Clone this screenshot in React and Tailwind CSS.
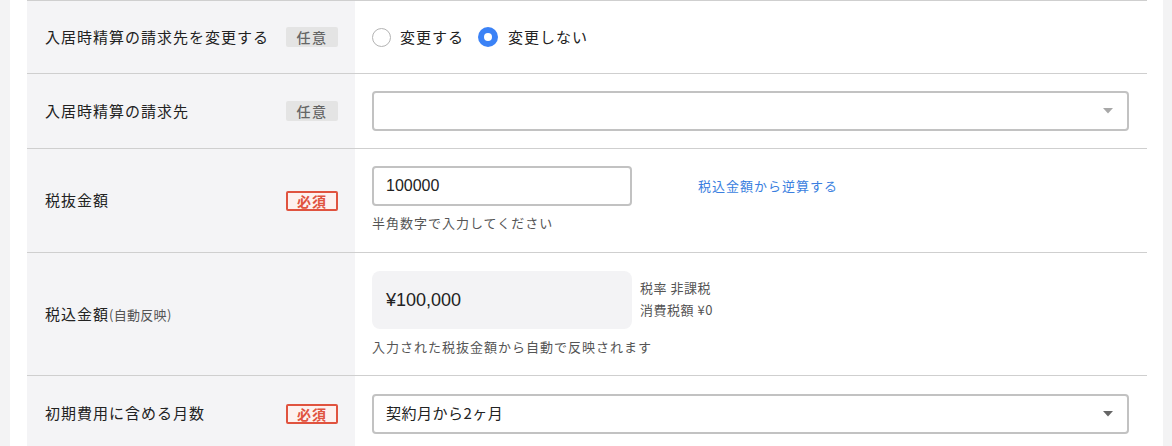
import React from "react";

const font = { fontFamily: '"Noto Sans CJK JP", "Liberation Sans", sans-serif' };

function Badge({ required }) {
  if (required) {
    return (
      <span className="flex h-[20px] w-[52px] items-center justify-center rounded-[2px] border-2 border-[#e0533f] bg-[#fdf1ef] text-[14px] font-bold leading-none tracking-[1px] text-[#e0533f]">
        必須
      </span>
    );
  }
  return (
    <span className="flex h-[20px] w-[52px] items-center justify-center rounded-[2px] bg-[#e4e4e4] text-[14px] font-medium leading-none tracking-[1.5px] text-[#666]">
      任意
    </span>
  );
}

function Row({ label, badge, children, height }) {
  return (
    <div className="flex border-b border-[#cfcfcf]" style={{ minHeight: height }}>
      <div className="flex w-[328px] shrink-0 items-center justify-between bg-[#f4f4f6] pl-[18px] pr-[17px]">
        <div className="text-[15px] tracking-[1px] text-[#222]">{label}</div>
        {badge}
      </div>
      <div className="flex flex-1 flex-col justify-center px-[17px] pr-[18px]">{children}</div>
    </div>
  );
}

function Caret({ color }) {
  return (
    <svg width="10" height="6" viewBox="0 0 10 6">
      <path d="M0 0 L10 0 L5 5.5 Z" fill={color} />
    </svg>
  );
}

export default function App() {
  return (
    <div className="flex h-[446px] w-[1172px] overflow-hidden bg-white" style={font}>
      <div className="w-[10px] shrink-0 bg-[#f3f3f4]" />
      <div className="w-[17px] shrink-0" />
      <div className="flex w-[1120px] shrink-0 flex-col border-t border-[#cfcfcf]">
        <Row label="入居時精算の請求先を変更する" badge={<Badge />} height={73}>
          <div className="flex items-center text-[15px] tracking-[1px] text-[#222]">
            <span className="mr-[9px] h-[19px] w-[19px] rounded-full border-[1.5px] border-[#b3b3b3] bg-white" />
            <span className="mr-[14px]">変更する</span>
            <span className="mr-[10px] flex h-[20px] w-[20px] items-center justify-center rounded-full bg-[#3b82f6]">
              <span className="h-[8px] w-[8px] rounded-full bg-white" />
            </span>
            <span>変更しない</span>
          </div>
        </Row>
        <Row label="入居時精算の請求先" badge={<Badge />} height={75}>
          <div className="flex h-[40px] w-full items-center justify-end rounded-[4px] border-2 border-[#c2c2c2] bg-white pr-[14px]">
            <Caret color="#a8a8a8" />
          </div>
        </Row>
        <Row label="税抜金額" badge={<Badge required />} height={104}>
          <div className="-mt-[2px] flex items-center">
            <div className="flex h-[40px] w-[260px] items-center rounded-[4px] border-2 border-[#c2c2c2] bg-white pl-[12px] text-[16px] text-[#222]" style={{ fontFamily: '"Liberation Sans", sans-serif' }}>
              100000
            </div>
            <a className="ml-[66px] -mt-[2px] text-[13px] tracking-[1px] text-[#3b7fe0]">税込金額から逆算する</a>
          </div>
          <div className="mt-[7px] text-[13px] tracking-[1px] text-[#555]">半角数字で入力してください</div>
        </Row>
        <Row
          label={
            <span>
              税込金額<span className="text-[13px] tracking-[0.3px] text-[#555]">(自動反映)</span>
            </span>
          }
          height={123}
        >
          <div className="flex items-center">
            <div className="flex h-[58px] w-[260px] items-center rounded-[8px] bg-[#f3f3f5] pl-[14px] text-[18px] text-[#222]" style={{ fontFamily: '"Liberation Sans", sans-serif' }}>
              ¥100,000
            </div>
            <div className="ml-[8px] -mt-[3px] flex flex-col text-[13px] leading-[22px] tracking-[0.5px] text-[#555]">
              <span>税率 非課税</span>
              <span>消費税額 ¥0</span>
            </div>
          </div>
          <div className="mt-[8px] text-[13px] tracking-[1px] text-[#555]">入力された税抜金額から自動で反映されます</div>
        </Row>
        <Row label="初期費用に含める月数" badge={<Badge required />} height={76}>
          <div className="flex h-[40px] w-full items-center justify-between rounded-[4px] border-2 border-[#c2c2c2] bg-white pl-[12px] pr-[14px]">
            <span className="text-[15px] tracking-[0.5px] text-[#222]">契約月から2ヶ月</span>
            <Caret color="#666" />
          </div>
        </Row>
      </div>
      <div className="w-[16px] shrink-0" />
      <div className="flex-1 bg-[#f3f3f4]" />
    </div>
  );
}
